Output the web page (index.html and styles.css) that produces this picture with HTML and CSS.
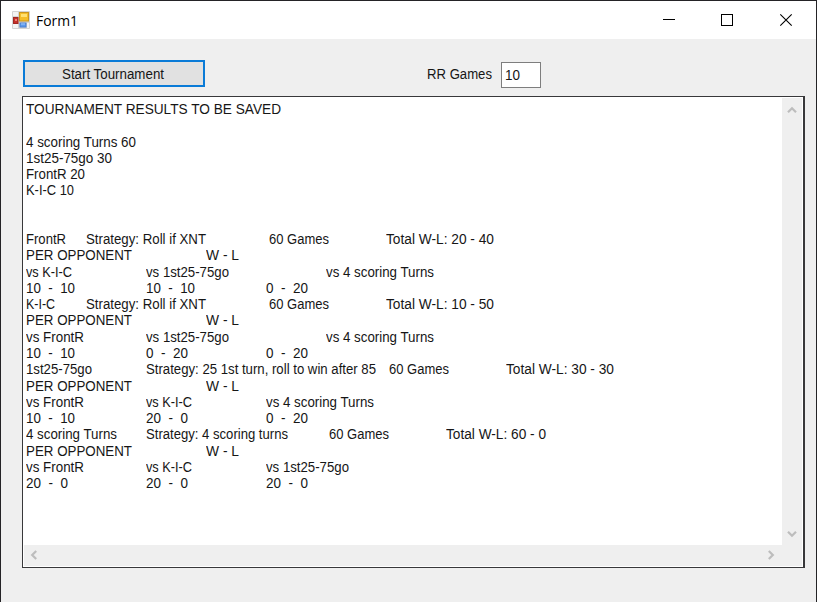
FILE: index.html
```html
<!DOCTYPE html>
<html lang="en">
<head>
<meta charset="utf-8">
<title>Form1</title>
<link rel="stylesheet" href="styles.css">
</head>
<body>
<div class="window">
  <header class="titlebar">
    <svg class="app-icon" width="18" height="18" viewBox="0 0 18 18">
      <rect x="0" y="0" width="18" height="18" rx="1" fill="#d3d3d3"/>
      <path d="M1 1h5v4H1zM1 13h5v4H1zM15 12h2v5h-2z" fill="#f3f3f3"/>
      <rect x="7.5" y="1.5" width="9" height="8.5" fill="#f5bd27" stroke="#c9951f"/>
      <path d="M9 3h6v3H9z" fill="#ffe071"/>
      <rect x="1.5" y="6.5" width="4.5" height="6" fill="#c5302a" stroke="#a12622"/>
      <path d="M3 8h2v2H3z" fill="#ee8178"/>
      <rect x="8" y="12" width="6" height="4" fill="#5c9aed" stroke="#4a7fd0"/>
      <path d="M9 12.5h4v1H9z" fill="#a4cbfa"/>
    </svg>
    <span class="title"><span class="fit" data-width="42">Form1</span></span>
    <svg class="controls" width="130" height="14" viewBox="0 0 130 14" fill="none" stroke="#000">
      <path d="M0 6.5h12" />
      <rect x="58.5" y="1.5" width="11" height="11"/>
      <path d="M117.3 1.3l11.4 11.4M128.7 1.3l-11.4 11.4" stroke-width="1.1"/>
    </svg>
  </header>
  <main class="form">
    <div class="toolbar">
      <button class="start"><span class="fit" data-width="102">Start Tournament</span></button>
      <label class="label"><span class="fit" data-width="65">RR Games</span></label>
      <div class="field"><span class="fit" data-width="15">10</span></div>
    </div>
    <section class="results">
      <div class="text" id="text"></div>
      <div class="vbar">
        <svg width="10" height="8" viewBox="0 0 10 8"><path d="M1 6.2L5 2.2L9 6.2"/></svg>
        <svg width="10" height="8" viewBox="0 0 10 8"><path d="M1 1.8L5 5.8L9 1.8"/></svg>
      </div>
      <div class="hbar">
        <svg width="8" height="10" viewBox="0 0 8 10"><path d="M6.2 1L2.2 5L6.2 9"/></svg>
        <svg width="8" height="10" viewBox="0 0 8 10"><path d="M1.8 1L5.8 5L1.8 9"/></svg>
      </div>
    </section>
  </main>
</div>
<script src="script.js"></script>
</body>
</html>
```
FILE: styles.css
```css
* { box-sizing: border-box; }
body {
  margin: 0;
  width: 817px;
  height: 602px;
  overflow: hidden;
  background: #efefef;
  color: #161616;
  font: 15.4px/16px "Liberation Sans", Arial, sans-serif;
}
.window {
  height: 602px;
  border: solid #242326;
  border-width: 1px 1px 0;
}
.titlebar {
  display: flex;
  align-items: center;
  height: 38px;
  padding: 0 23px 0 11px;
  background: #fff;
}
.app-icon { display: block; }
.title {
  flex: 1;
  margin: 0 0 0 6px;
  color: #000;
  font: 15px/20px "Open Sans", sans-serif;
}
.controls { display: block; }
.form { padding: 21px 11px 0 21px; }
.toolbar { display: flex; height: 28px; }
.start {
  display: flex;
  justify-content: center;
  align-items: center;
  width: 182px;
  height: 27px;
  margin-left: 1px;
  padding: 0 2px 0 0;
  border: 2px solid #0a7bd7;
  border-radius: 0;
  background: #e1e1e1;
  color: inherit;
  font: inherit;
}
.label { width: 74px; margin: 6px 0 0 222px; }
.field {
  width: 40px;
  height: 26px;
  margin-top: 2px;
  padding: 4px 0 0 3px;
  border: 1px solid #7e7e7e;
  background: #fff;
}
.fit {
  display: inline-block;
  white-space: pre;
  transform-origin: 0 50%;
}
.results {
  display: grid;
  grid-template: 448px 22px / 759px 21px;
  width: 783px;
  height: 472px;
  margin-top: 8px;
  border: 1px solid #38383a;
  border-right-width: 2px;
  background: #fff;
}
.text { padding: 4px 0 0 3px; }
.line {
  display: flex;
  height: 16.27px;
  line-height: 16.27px;
}
.cell { flex: none; }
.vbar svg, .hbar svg {
  display: block;
  fill: none;
  stroke: #bdbdbd;
  stroke-width: 2.2;
}
.vbar {
  display: flex;
  flex-direction: column;
  justify-content: space-between;
  margin: 1px 1px 0 0;
  padding: 8px 0 7px 5px;
  background: #efefef;
}
.hbar {
  display: flex;
  grid-column: 1 / 3;
  justify-content: space-between;
  margin: 0 1px 1px 1px;
  padding: 5px 27px 0 6px;
  background: #efefef;
}
```
FILE: script.js
```js
// Each line is a list of [text, tab position, drawn width].
const opponent = [["PER OPPONENT", 0, 106], ["W - L", 180, 33]];
const lines = [
  [["TOURNAMENT RESULTS TO BE SAVED", 0, 255]],
  [],
  [["4 scoring Turns 60", 0, 110]],
  [["1st25-75go 30", 0, 86]],
  [["FrontR 20", 0, 59]],
  [["K-I-C 10", 0, 48]],
  [],
  [],
  [["FrontR", 0, 40], ["Strategy: Roll if XNT", 60, 120], ["60 Games", 243, 60], ["Total W-L: 20 - 40", 360, 108]],
  opponent,
  [["vs K-I-C", 0, 46], ["vs 1st25-75go", 120, 83], ["vs 4 scoring Turns", 300, 108]],
  [["10  -  10", 0, 49], ["10  -  10", 120, 49], ["0  -  20", 240, 42]],
  [["K-I-C", 0, 29], ["Strategy: Roll if XNT", 60, 120], ["60 Games", 243, 60], ["Total W-L: 10 - 50", 360, 108]],
  opponent,
  [["vs FrontR", 0, 58], ["vs 1st25-75go", 120, 83], ["vs 4 scoring Turns", 300, 108]],
  [["10  -  10", 0, 49], ["0  -  20", 120, 42], ["0  -  20", 240, 42]],
  [["1st25-75go", 0, 66], ["Strategy: 25 1st turn, roll to win after 85", 120, 230], ["60 Games", 363, 60], ["Total W-L: 30 - 30", 480, 108]],
  opponent,
  [["vs FrontR", 0, 58], ["vs K-I-C", 120, 46], ["vs 4 scoring Turns", 240, 108]],
  [["10  -  10", 0, 49], ["20  -  0", 120, 42], ["0  -  20", 240, 42]],
  [["4 scoring Turns", 0, 91], ["Strategy: 4 scoring turns", 120, 142], ["60 Games", 303, 60], ["Total W-L: 60 - 0", 420, 100]],
  opponent,
  [["vs FrontR", 0, 58], ["vs K-I-C", 120, 46], ["vs 1st25-75go", 240, 83]],
  [["20  -  0", 0, 42], ["20  -  0", 120, 42], ["20  -  0", 240, 42]]
];

const box = document.getElementById("text");
for (const line of lines) {
  const row = document.createElement("div");
  row.className = "line";
  line.forEach(([text, start, width], i) => {
    const cell = document.createElement("div");
    cell.className = "cell";
    const end = i + 1 < line.length ? line[i + 1][1] : start + width;
    cell.style.width = `${end - start}px`;
    const span = document.createElement("span");
    span.className = "fit";
    span.dataset.width = width;
    span.textContent = text;
    cell.append(span);
    row.append(cell);
  });
  box.append(row);
}

// Condense every text run to its drawn width, keeping layout space in step.
for (const span of document.querySelectorAll(".fit")) {
  const natural = span.getBoundingClientRect().width;
  const width = Number(span.dataset.width);
  span.style.transform = `scaleX(${width / natural})`;
  span.style.marginRight = `${width - natural}px`;
}
```
